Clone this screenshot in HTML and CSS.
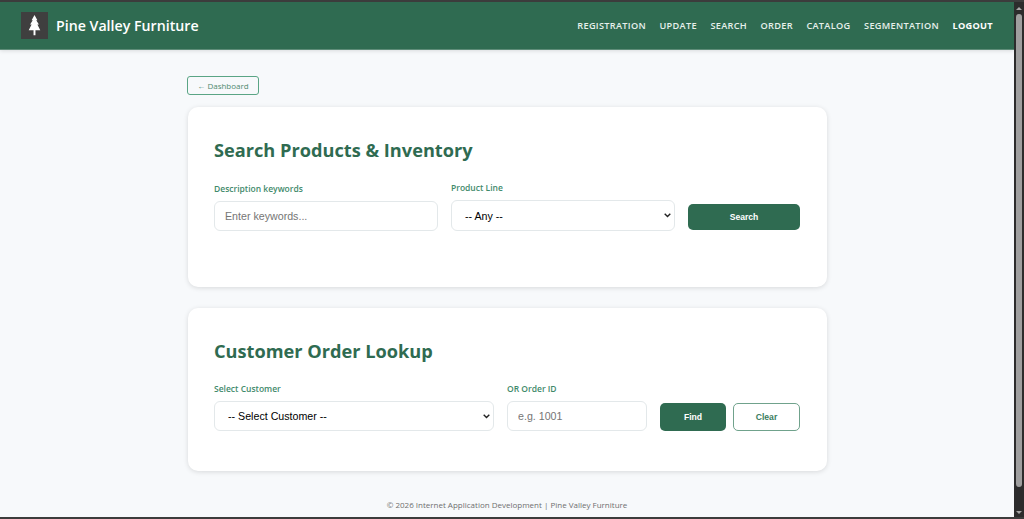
FILE: index.html
```html
<!DOCTYPE html>
<html lang="en">
<head>
  <meta charset="UTF-8">
  <meta name="viewport" content="width=device-width, initial-scale=1.0">
  <title>Search - Pine Valley Furniture</title>
  <link rel="stylesheet" href="styles.css">
</head>
<body>
  <div class="window">
    <div class="page">
      <nav class="navbar">
        <a class="brand" href="#">
          <span class="brand-logo">
            <svg viewBox="0 0 28 28" width="28" height="28" aria-hidden="true">
              <path fill="#fff" d="M14 3 L17 8.5 L15.8 8.5 L18.6 13 L17 13 L20 19 L15 19 L15 24 L13 24 L13 19 L8 19 L11 13 L9.4 13 L12.2 8.5 L11 8.5 Z"/>
            </svg>
          </span>
          Pine Valley Furniture
        </a>
        <ul class="nav-links">
          <li><a href="#">Registration</a></li>
          <li><a href="#">Update</a></li>
          <li><a href="#">Search</a></li>
          <li><a href="#">Order</a></li>
          <li><a href="#">Catalog</a></li>
          <li><a href="#">Segmentation</a></li>
          <li><a class="logout" href="#">Logout</a></li>
        </ul>
      </nav>

      <main class="container">
        <a class="back-btn" href="#">← Dashboard</a>

        <section class="card card-search">
          <h2>Search Products &amp; Inventory</h2>
          <form class="form-row">
            <div class="field field-half">
              <label for="keywords">Description keywords</label>
              <input id="keywords" type="text" placeholder="Enter keywords...">
            </div>
            <div class="field field-half">
              <label for="line">Product Line</label>
              <select id="line" class="tall">
                <option>-- Any --</option>
              </select>
            </div>
            <button class="btn btn-search" type="button">Search</button>
          </form>
        </section>

        <section class="card card-order">
          <h2>Customer Order Lookup</h2>
          <form class="form-row">
            <div class="field field-customer">
              <label for="customer">Select Customer</label>
              <select id="customer">
                <option>-- Select Customer --</option>
              </select>
            </div>
            <div class="field field-order">
              <label for="order">OR Order ID</label>
              <input id="order" type="text" placeholder="e.g. 1001">
            </div>
            <div class="btn-group">
              <button class="btn btn-find" type="button">Find</button>
              <button class="btn btn-clear" type="button">Clear</button>
            </div>
          </form>
        </section>
      </main>

      <footer class="footer">© 2026 Internet Application Development | Pine Valley Furniture</footer>
    </div>

    <div class="scrollbar">
      <span class="arrow arrow-up"></span>
      <span class="thumb"></span>
      <span class="arrow arrow-down"></span>
    </div>
  </div>
</body>
</html>
```

FILE: styles.css
```css
* {
  box-sizing: border-box;
}
html, body {
  height: 100%;
  margin: 0;
  overflow: hidden;
}
body {
  background-color: #3c3c3c;
  padding: 2px 0;
  font-family: "Open Sans", "Noto Sans", sans-serif;
}
.window {
  display: flex;
  height: 100%;
}
.page {
  flex: 1;
  min-width: 0;
  background-color: #f7f9fb;
  overflow: hidden;
}
.navbar {
  display: flex;
  justify-content: space-between;
  align-items: center;
  height: 48px;
  padding: 0 21px;
  background-color: #2f6b51;
  border-bottom: 1px solid #5e8c78;
  box-shadow: 0 1px 4px rgba(0, 0, 0, 0.12);
}
.brand {
  display: flex;
  align-items: center;
  gap: 8px;
  color: #ffffff;
  font-size: 14.2px;
  font-weight: 600;
  text-decoration: none;
}
.brand-logo {
  display: block;
  width: 27px;
  height: 27px;
  background-color: #3f3f3f;
}
.brand-logo svg {
  display: block;
  width: 27px;
  height: 27px;
}
.nav-links {
  display: flex;
  gap: 13.5px;
  margin: 0;
  padding: 0;
  list-style: none;
  font-size: 9.2px;
  line-height: 14px;
}
.nav-links a {
  color: #e6f0eb;
  font-weight: 600;
  letter-spacing: 0.3px;
  text-transform: uppercase;
  text-decoration: none;
}
.nav-links .logout {
  color: #ffffff;
  font-weight: 700;
}
.container {
  width: 640px;
  margin: 26px 0 0 187px;
}
.back-btn {
  display: block;
  width: 72px;
  height: 19px;
  border: 1px solid #5aa585;
  border-radius: 3px;
  color: #4f8a70;
  font-size: 8px;
  line-height: 17px;
  text-align: center;
  text-decoration: none;
}
.card {
  margin-top: 12px;
  padding: 30px 26.5px 0;
  margin-left: 0.5px;
  background-color: #ffffff;
  border-radius: 10px;
  box-shadow: 0 1px 5px rgba(0, 0, 0, 0.13);
}
.card-search {
  height: 180px;
}
.card-order {
  height: 163px;
  margin-top: 21px;
}
.card h2 {
  margin: 0;
  color: #2f6b51;
  font-size: 18.2px;
  font-weight: 700;
  line-height: 26px;
}
.form-row {
  display: flex;
  align-items: flex-end;
  gap: 13px;
  margin-top: 19px;
}
.field label {
  display: block;
  margin-bottom: 6px;
  color: #3f8a6b;
  font-size: 8.5px;
  font-weight: 600;
  line-height: 12px;
}
.field-half {
  width: 224px;
}
.field-customer {
  width: 280px;
}
.field-order {
  width: 140px;
}
input, select {
  display: block;
  width: 100%;
  height: 30px;
  padding: 0 10px;
  border: 1px solid #e3e8ea;
  border-radius: 6px;
  background-color: #ffffff;
  font-family: "Liberation Sans", Arial, sans-serif;
  font-size: 10.67px;
  color: #000000;
  outline: none;
}
select {
  appearance: none;
  padding-left: 13px;
  background-image: url("data:image/svg+xml,%3Csvg xmlns='http://www.w3.org/2000/svg' width='7' height='5'%3E%3Cpath d='M.7.8 3.5 3.6 6.3.8' fill='none' stroke='%23222' stroke-width='1.4'/%3E%3C/svg%3E");
  background-repeat: no-repeat;
  background-position: right 3px center;
}
select.tall {
  height: 31px;
}
input::placeholder {
  color: #757575;
}
.btn {
  height: 26px;
  border-radius: 5px;
  font-family: "Liberation Sans", Arial, sans-serif;
  font-size: 8.6px;
  font-weight: 700;
  cursor: pointer;
}
.btn-search {
  width: 112px;
  margin-bottom: 1px;
  border: none;
  background-color: #2f6b51;
  color: #ffffff;
}
.btn-group {
  display: flex;
  gap: 7px;
}
.btn-find, .btn-clear {
  width: 66px;
  height: 28px;
}
.btn-find {
  border: none;
  background-color: #2f6b51;
  color: #ffffff;
}
.btn-clear {
  width: 67px;
  border: 1px solid #70a28c;
  background-color: #ffffff;
  color: #3a7d60;
}
.footer {
  margin-top: 28px;
  color: #6f6f6f;
  font-size: 8px;
  line-height: 12px;
  text-align: center;
}
.scrollbar {
  display: flex;
  flex-direction: column;
  align-items: center;
  width: 10px;
  background-color: #2c2c2c;
}
.thumb {
  width: 6px;
  height: 473px;
  margin-top: 4px;
  background-color: #9f9f9f;
  border-radius: 3px;
}
.arrow {
  width: 0;
  height: 0;
  border-left: 3px solid transparent;
  border-right: 3px solid transparent;
}
.arrow-up {
  margin-top: 5px;
  border-bottom: 3px solid #a8a8a8;
}
.arrow-down {
  margin-top: 24px;
  border-top: 3px solid #a8a8a8;
}
```
